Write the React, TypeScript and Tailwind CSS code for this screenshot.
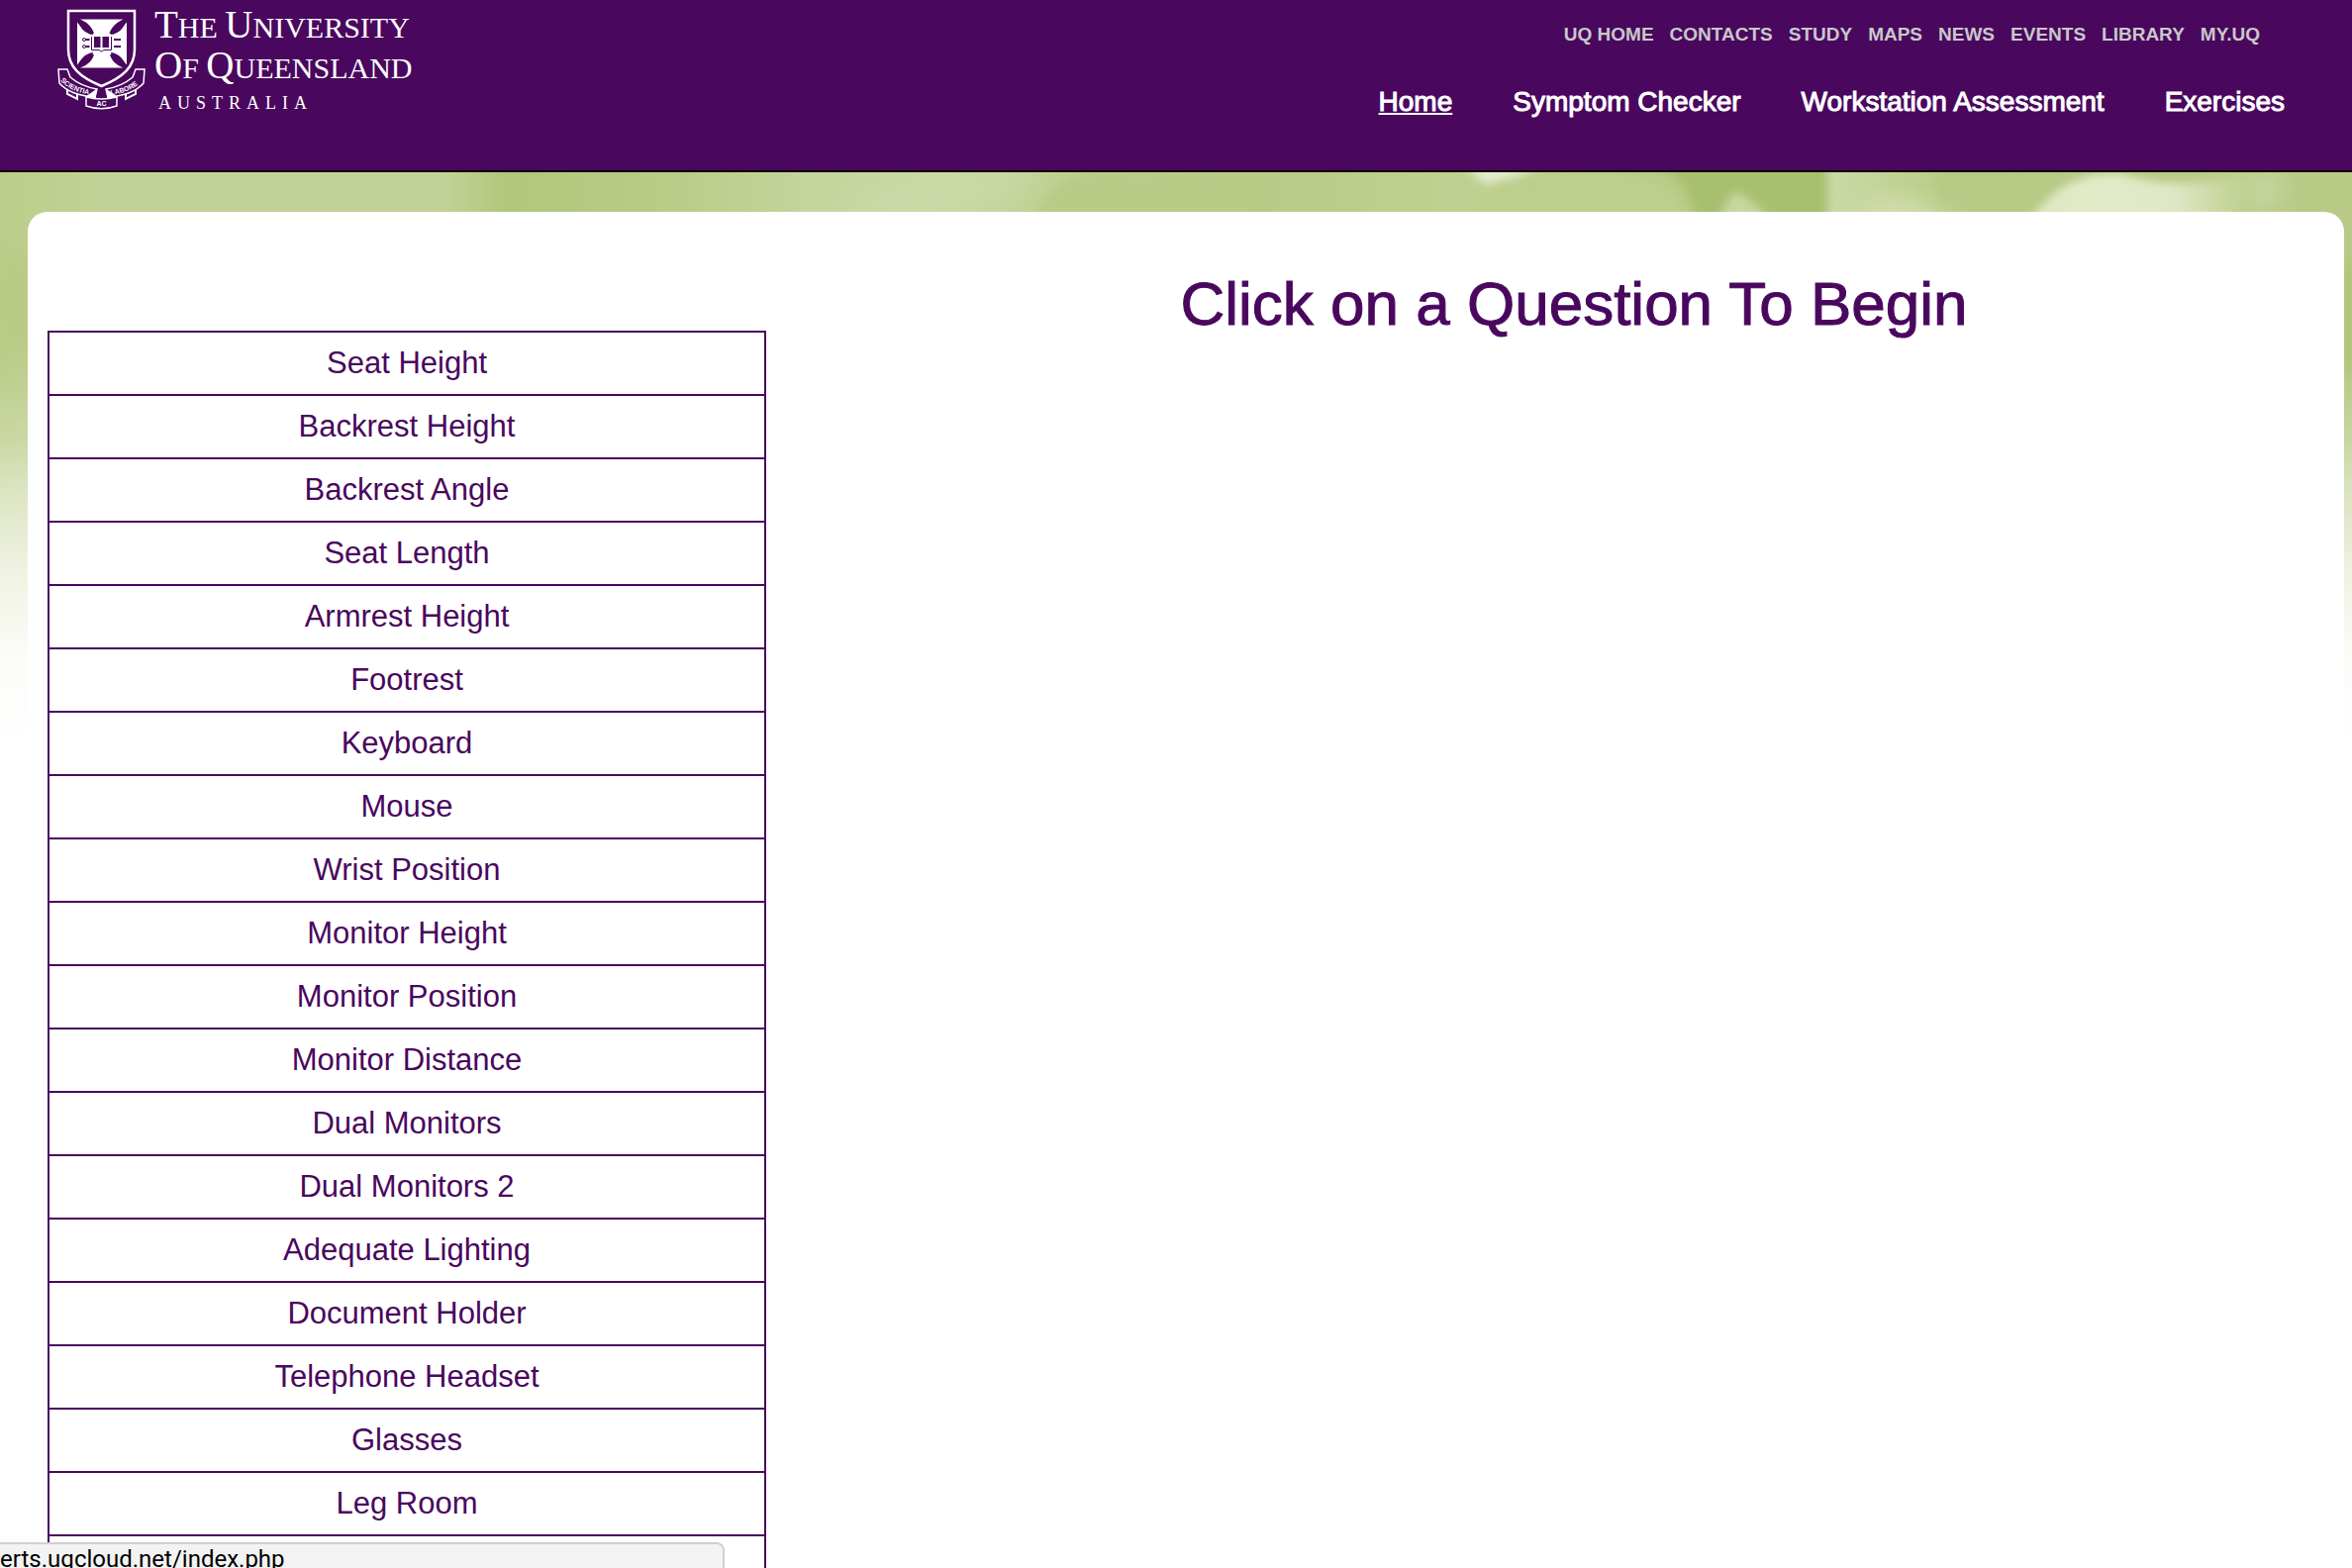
const utilityLinks = ["UQ HOME", "CONTACTS", "STUDY", "MAPS", "NEWS", "EVENTS", "LIBRARY", "MY.UQ"];

const mainLinks = ["Home", "Symptom Checker", "Workstation Assessment", "Exercises"];

const questions = [
  "Seat Height",
  "Backrest Height",
  "Backrest Angle",
  "Seat Length",
  "Armrest Height",
  "Footrest",
  "Keyboard",
  "Mouse",
  "Wrist Position",
  "Monitor Height",
  "Monitor Position",
  "Monitor Distance",
  "Dual Monitors",
  "Dual Monitors 2",
  "Adequate Lighting",
  "Document Holder",
  "Telephone Headset",
  "Glasses",
  "Leg Room",
];

function Crest() {
  return (
    <svg viewBox="0 0 90 102" className="h-[102px] w-[90px] shrink-0" aria-hidden="true">
      <path d="M11 2h67v39c0 18-12 28-33.500 37C23 69 11 59 11 41z" fill="none" stroke="#fff" strokeWidth="2.500" />
      {/* cross pattee */}
      <path
        d="M23 10.500h43.500c-8 4-13 9-14 15v1c6-1 11-5 17.500-13v43c-6-8-11-11-17-12v1c1 6 6 11 13.500 14H23c8-3 13-8 14-14v-1c-6 1-11 4-17 12V13.500c6 8 11 12 17 13v-1c-1-6-6-11-14-15z"
        fill="#fff"
      />
      <path d="M34 25h22v21H34z" fill="#fff" />
      {/* quadrant curves beside the cross */}
      <path d="M21 11c8 1 14 6 15 15-8-1-14-7-15-15zM69 11c-8 1-14 6-15 15 8-1 14-7 15-15zM21 59c1-8 7-14 15-15-1 8-7 14-15 15zM69 59c-1-8-7-14-15-15 1 8 7 14 15 15z" fill="#49075e" />
      {/* open book with clasps */}
      <path d="M34.500 28v13.500h7.500l2.500 1.500 2.500-1.500h7.500V28" fill="none" stroke="#49075e" strokeWidth="1" />
      <path d="M37 28h6.500v11H37zM45.500 28H52v11h-6.500z" fill="#49075e" />
      <path d="M28 31h4.500M28 38h4.500M57 31h7M57 38h7" stroke="#49075e" strokeWidth="2" />
      <circle cx="27" cy="31" r="1.500" fill="#fff" stroke="#49075e" />
      <circle cx="27" cy="38" r="1.500" fill="#fff" stroke="#49075e" />
      {/* motto ribbon */}
      <g fill="#49075e" stroke="#fff" strokeWidth="1.500" strokeLinejoin="miter">
        <path d="M10 82v4l10 5v-6M79 82v4l-10 5v-6" strokeWidth="2" />
        <path d="M1 61h9l3 8c7 6 15 10 27 12l-2 8C22 88 9 83 2 75z" />
        <path d="M88 61h-9l-3 8c-7 6-15 10-27 12l2 8c16-1 29-6 36-14z" />
        <path d="M29 89c10 2.500 21 2.500 31 0v9c-10 3.500-21 3.500-31 0z" />
        <path d="M39 82l-9 6.500 8 1zM50 82l9 6.500-8 1z" fill="#fff" />
      </g>
      <defs>
        <path id="mottoLeft" d="M3 72.500C10 80 20 85 36 87" />
        <path id="mottoRight" d="M54 87C68 85 80 80 87 71" />
      </defs>
      <g fill="#fff" fontFamily="Liberation Sans, sans-serif" fontWeight="bold" fontSize="7">
        <text>
          <textPath href="#mottoLeft">SCIENTIA</textPath>
        </text>
        <text>
          <textPath href="#mottoRight">LABORE</textPath>
        </text>
        <text x="39.500" y="97.500">AC</text>
      </g>
    </svg>
  );
}

function Logo() {
  return (
    <a href="#" className="flex gap-2 pt-[9px] pl-[58px] font-['Liberation_Serif',serif] text-white">
      <Crest />
      <span className="-mt-[3px] block whitespace-nowrap">
        <span className="block text-[30px] leading-[38px]">
          <span className="text-[39px]">T</span>HE <span className="text-[39px]">U</span>NIVERSITY
        </span>
        <span className="block text-[30px] leading-[38px]">
          <span className="text-[39px]">O</span>F <span className="text-[39px]">Q</span>UEENSLAND
        </span>
        <span className="block pl-1 text-[18px] leading-8 tracking-[6px]">AUSTRALIA</span>
      </span>
    </a>
  );
}

function Backdrop() {
  return (
    <svg
      viewBox="0 0 2376 580"
      preserveAspectRatio="none"
      className="absolute inset-x-0 top-0 h-[580px] w-full"
      aria-hidden="true"
    >
      <defs>
        <linearGradient id="fade" x1="0" y1="0" x2="0" y2="1">
          <stop offset="0.340" stopColor="#fff" stopOpacity="0" />
          <stop offset="0.460" stopColor="#fff" stopOpacity="0.200" />
          <stop offset="0.560" stopColor="#fff" stopOpacity="0.480" />
          <stop offset="0.700" stopColor="#fdfcf9" stopOpacity="0.800" />
          <stop offset="0.850" stopColor="#fefefc" stopOpacity="0.970" />
          <stop offset="1" stopColor="#fff" stopOpacity="1" />
        </linearGradient>
        <linearGradient id="base" x1="0" y1="0" x2="1" y2="0">
          <stop offset="0" stopColor="#bccd8a" />
          <stop offset="0.040" stopColor="#c2d195" />
          <stop offset="0.190" stopColor="#c2d195" />
          <stop offset="0.215" stopColor="#b2c67c" />
          <stop offset="0.280" stopColor="#b9cb86" />
          <stop offset="0.340" stopColor="#c4d49a" />
          <stop offset="0.400" stopColor="#c9d8a2" />
          <stop offset="0.450" stopColor="#c0d092" />
          <stop offset="0.530" stopColor="#b9ca87" />
          <stop offset="0.620" stopColor="#bfd090" />
          <stop offset="0.720" stopColor="#b7ca84" />
          <stop offset="1" stopColor="#b9ca87" />
        </linearGradient>
        <linearGradient id="haze" x1="0" y1="0" x2="1" y2="0">
          <stop offset="0" stopColor="#cbd9a6" />
          <stop offset="1" stopColor="#bccd8a" />
        </linearGradient>
        <linearGradient id="petal" x1="0" y1="0" x2="1" y2="0">
          <stop offset="0" stopColor="#dbe6bd" />
          <stop offset="0.300" stopColor="#e2ebc9" />
          <stop offset="0.650" stopColor="#dfe8c6" />
          <stop offset="1" stopColor="#bccd8a" />
        </linearGradient>
        <filter id="soft" x="-20%" y="-20%" width="140%" height="140%">
          <feGaussianBlur stdDeviation="4" />
        </filter>
        <filter id="softer" x="-50%" y="-50%" width="200%" height="200%">
          <feGaussianBlur stdDeviation="12" />
        </filter>
      </defs>
      <rect width="2376" height="580" fill="url(#base)" />
      <g filter="url(#softer)">
        <path d="M920 50c20-8 90-14 130-50h-90c-60 0-80 20-120 50z" fill="#cbd9a6" />
        <path d="M1130 10c30-8 60-8 80 0 0 10-50 16-80 8z" fill="#c4d398" />
      </g>
      <g filter="url(#soft)">
        <path d="M1046 54c0-24 20-44 50-54h180v54z" fill="#b9cb87" />
        <path d="M1480-6h76l-16 8-40 10z" fill="#e4ecd0" />
        <path d="M1560 0c100-6 130 6 150 50h-190z" fill="#bdce8d" />
        <path d="M1676-6h170v60h-134c-2-24-4-44-36-60z" fill="#a9bf70" />
        <path d="M1732 54l18-32c12-4 24 12 44 32z" fill="#c8d7a0" />
        <path d="M1846-6h110v60h-110z" fill="url(#haze)" />
      </g>
      <g filter="url(#softer)">
        <path d="M1870 54c20-34 60-30 90-12l30 12z" fill="#d4e0b4" />
      </g>
      <g filter="url(#soft)">
        <path d="M2046 58c20-40 56-60 98-56 50 16 90 8 130 0v24c-10 16-30 24-40 32z" fill="url(#petal)" />
        <path d="M2180-8h90c0 10-30 14-90 0z" fill="#bfd090" />
      </g>
      <g filter="url(#softer)">
        <path d="M2270 0h36v24l-36 26z" fill="#c8d7a0" />
        <path d="M2364 90h20v110h-20z" fill="#adc273" />
        <path d="M-10 80h50v100h-50z" fill="#b9cb86" />
      </g>
      <rect width="2376" height="580" fill="url(#fade)" />
    </svg>
  );
}

export default function App() {
  return (
    <div className="relative flex h-screen flex-col overflow-hidden bg-white font-['Liberation_Sans',Arial,sans-serif] text-[#49075e]">
      <header className="flex h-[174px] shrink-0 items-start justify-between border-b-2 border-black bg-[#49075e]">
        <Logo />
        <div className="flex flex-col items-end pt-[23px] pr-[68px]">
          <nav aria-label="University" className="flex gap-4 pr-[25px] text-[19px] leading-6 font-bold text-[#c8c8c8]">
            {utilityLinks.map((label) => (
              <a key={label} href="#">
                {label}
              </a>
            ))}
          </nav>
          <nav aria-label="Main" className="flex gap-[61px] pt-10 text-[28px] leading-8 text-white [-webkit-text-stroke:1px_white]">
            {mainLinks.map((label, i) => (
              <a key={label} href="#" className={i === 0 ? "underline decoration-2 underline-offset-2" : ""}>
                {label}
              </a>
            ))}
          </nav>
        </div>
      </header>

      <div className="relative grow pt-10">
        <Backdrop />
        <main className="relative mr-2 ml-7 grid min-h-full grid-cols-[784fr_1556fr] rounded-t-[20px] bg-white">
          <ul className="mt-[120px] mr-[38px] ml-5 border-2 border-[#49075e]">
            {questions.map((question) => (
              <li key={question} className="border-b-2 border-[#49075e]">
                <button type="button" className="block h-[62px] w-full text-center text-[31px] leading-[62px]">
                  {question}
                </button>
              </li>
            ))}
            <li className="h-16" />
          </ul>
          <h1 className="pt-[57px] text-center text-[62px] leading-[72px] [-webkit-text-stroke:1px_#49075e]">
            Click on a Question To Begin
          </h1>
        </main>
      </div>

      <div className="absolute bottom-0 left-0 h-[26px] w-[732px] overflow-hidden rounded-tr-lg border-t-2 border-r-2 border-[#d0d0d0] bg-[#f3f3f3] font-['Roboto',sans-serif] text-[24px] leading-[30px] text-black">
        erts.uqcloud.net/index.php
      </div>
    </div>
  );
}
